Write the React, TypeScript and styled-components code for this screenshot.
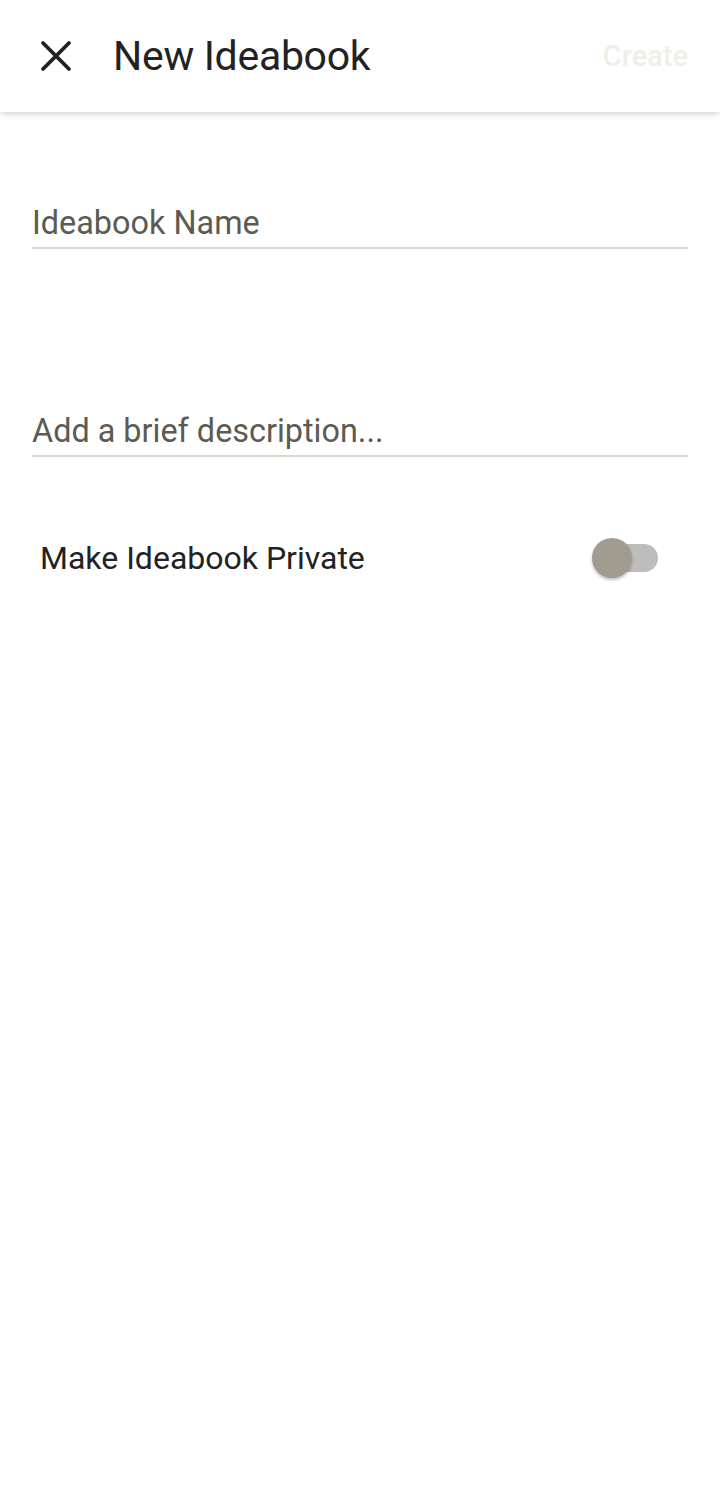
import styled, { createGlobalStyle } from "styled-components";

const GlobalStyle = createGlobalStyle`
  html, body {
    margin: 0;
    padding: 0;
    background: #ffffff;
  }
  body {
    font-family: Roboto, "Liberation Sans", sans-serif;
  }
`;

export default function App() {
  return (
    <Page>
      <GlobalStyle />
      <Toolbar>
        <CloseButton aria-label="Close">
          <svg width="32" height="32" viewBox="0 0 32 32">
            <path
              d="M3 3 L29 29 M29 3 L3 29"
              stroke="#222"
              strokeWidth="3.8"
              strokeLinecap="round"
            />
          </svg>
        </CloseButton>
        <Title>New Ideabook</Title>
        <CreateButton>Create</CreateButton>
      </Toolbar>
      <Form>
        <Field $top={93}>
          <Input placeholder="Ideabook Name" />
        </Field>
        <Field $top={164}>
          <Input placeholder="Add a brief description..." />
        </Field>
        <ToggleRow>
          <ToggleLabel>Make Ideabook Private</ToggleLabel>
          <Switch>
            <Track />
            <Thumb />
          </Switch>
        </ToggleRow>
      </Form>
    </Page>
  );
}

const Page = styled.div`
  min-height: 1507px;
  background: #ffffff;
`;

const Toolbar = styled.header`
  height: 112px;
  display: flex;
  align-items: center;
  padding: 0 32px 0 40px;
  box-sizing: border-box;
  background: #ffffff;
  box-shadow: 0 2px 7px rgba(0, 0, 0, 0.18);
`;

const CloseButton = styled.button`
  width: 32px;
  height: 32px;
  padding: 0;
  border: none;
  background: none;
  display: flex;
  margin-right: 41px;
`;

const Title = styled.h1`
  flex: 1;
  margin: 0;
  font-size: 41px;
  font-weight: 400;
  color: #222222;
  letter-spacing: -0.3px;
`;

const CreateButton = styled.button`
  border: none;
  background: none;
  padding: 0;
  font-family: Roboto, "Liberation Sans", sans-serif;
  font-size: 29px;
  font-weight: 500;
  color: #efeee8;
`;

const Form = styled.div`
  padding: 0 32px;
  display: flex;
  flex-direction: column;
`;

const Field = styled.div<{ $top: number }>`
  margin-top: ${(p) => p.$top}px;
  border-bottom: 2px solid #dcd9cc;
  padding-bottom: 6px;
`;

const Input = styled.input`
  width: 100%;
  border: none;
  outline: none;
  padding: 0;
  font-family: Roboto, "Liberation Sans", sans-serif;
  font-size: 32.4px;
  line-height: 36px;
  color: #222;
  background: transparent;
  &::placeholder {
    color: #5b5b53;
  }
`;

const ToggleRow = styled.div`
  margin-top: 80px;
  display: flex;
  align-items: center;
  justify-content: space-between;
  padding: 0 30px 0 8px;
`;

const ToggleLabel = styled.span`
  font-size: 32px;
  color: #222222;
`;

const Switch = styled.div`
  position: relative;
  width: 66px;
  height: 42px;
`;

const Track = styled.div`
  position: absolute;
  left: 5px;
  right: 0;
  top: 7px;
  height: 28px;
  border-radius: 14px;
  background: #bdbdbd;
`;

const Thumb = styled.div`
  position: absolute;
  left: 0;
  top: 1px;
  width: 40px;
  height: 40px;
  border-radius: 50%;
  background: #a09d90;
  box-shadow: 0 2px 3px rgba(0, 0, 0, 0.25);
`;
